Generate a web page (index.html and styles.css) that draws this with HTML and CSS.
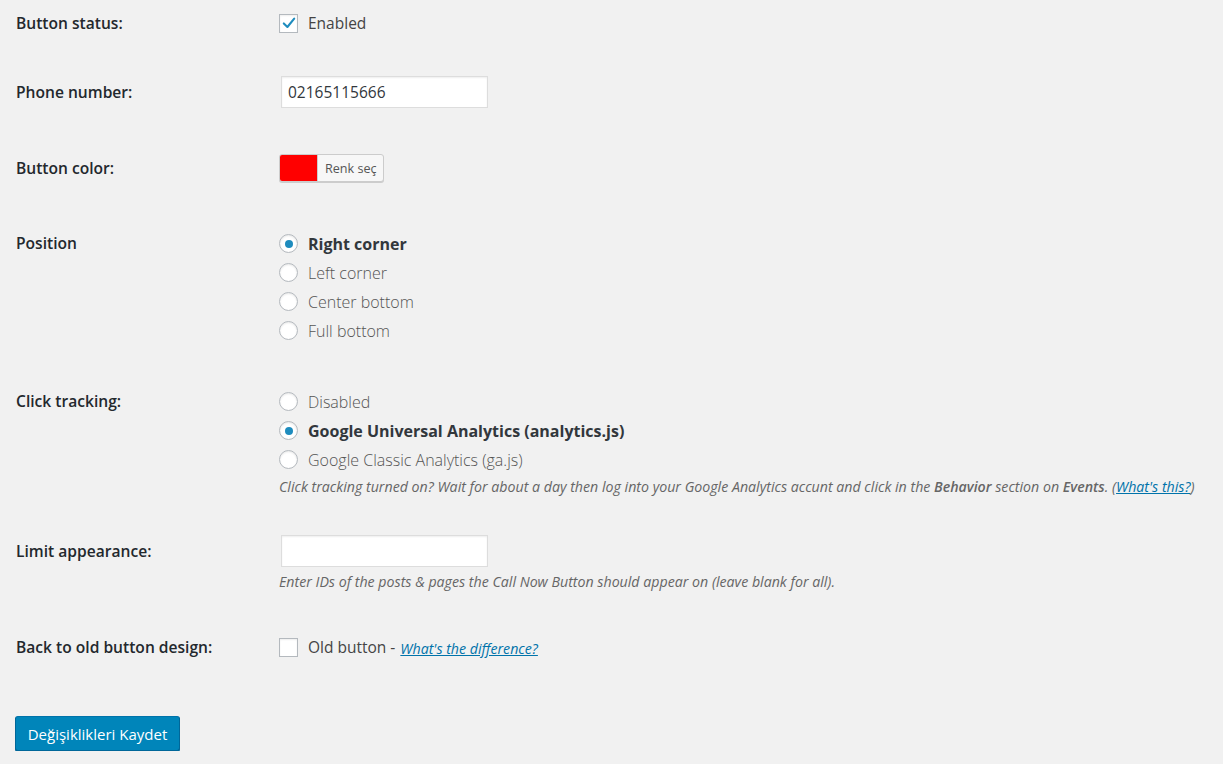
FILE: index.html
```html
<!DOCTYPE html>
<html lang="tr">
<head>
  <meta charset="UTF-8" />
  <title>Call Now Button</title>
  <link rel="stylesheet" href="styles.css">
</head>
<body>
  <form class="settings">

    <div class="row row-center row-status">
      <div class="label">Button status:</div>
      <div class="field">
        <label class="check">
          <span class="box checked">
            <svg viewBox="0 0 20 20" width="16" height="16"><path d="M3.5 10.5 L8 15 L16.5 4.5" fill="none" stroke="#1e8cbe" stroke-width="2.6" stroke-linecap="round" stroke-linejoin="round"/></svg>
          </span>
          <span class="text">Enabled</span>
        </label>
      </div>
    </div>

    <div class="row row-center row-phone">
      <div class="label">Phone number:</div>
      <div class="field">
        <input class="input" type="text" value="02165115666">
      </div>
    </div>

    <div class="row row-center row-color">
      <div class="label">Button color:</div>
      <div class="field">
        <button type="button" class="color-btn">
          <span class="swatch"></span>
          <span class="color-text">Renk seç</span>
        </button>
      </div>
    </div>

    <div class="row row-position">
      <div class="label label-list">Position</div>
      <div class="field">
        <label class="radio"><span class="dot checked"></span><span class="text strong">Right corner</span></label>
        <label class="radio"><span class="dot"></span><span class="text light">Left corner</span></label>
        <label class="radio"><span class="dot"></span><span class="text light">Center bottom</span></label>
        <label class="radio"><span class="dot"></span><span class="text light">Full bottom</span></label>
      </div>
    </div>

    <div class="row row-tracking">
      <div class="label label-list">Click tracking:</div>
      <div class="field">
        <label class="radio"><span class="dot"></span><span class="text light">Disabled</span></label>
        <label class="radio"><span class="dot checked"></span><span class="text strong">Google Universal Analytics (analytics.js)</span></label>
        <label class="radio"><span class="dot"></span><span class="text light">Google Classic Analytics (ga.js)</span></label>
        <p class="description">Click tracking turned on? Wait for about a day then log into your Google Analytics accunt and click in the <strong>Behavior</strong> section on <strong>Events</strong>. (<a href="#">What's this?</a>)</p>
      </div>
    </div>

    <div class="row row-limit">
      <div class="label label-input">Limit appearance:</div>
      <div class="field">
        <input class="input" type="text" value="">
        <p class="description desc-limit">Enter IDs of the posts &amp; pages the Call Now Button should appear on (leave blank for all).</p>
      </div>
    </div>

    <div class="row row-center row-old">
      <div class="label">Back to old button design:</div>
      <div class="field">
        <label class="check">
          <span class="box"></span>
          <span class="text">Old button</span>
        </label>
        <span class="dash">-</span>
        <a class="small-link" href="#">What's the difference?</a>
      </div>
    </div>

    <div class="submit">
      <button type="button" class="button-primary">Değişiklikleri Kaydet</button>
    </div>
  </form>
</body>
</html>
```

FILE: styles.css
```css
body {
  margin: 0;
  background: #f1f1f1;
  color: #444;
  font-family: "Open Sans", "Noto Sans", sans-serif;
  font-size: 13px;
}

.settings {
  padding: 13px 0 0 16px;
  display: flex;
  flex-direction: column;
}

.row {
  display: flex;
  align-items: flex-start;
}

.row-center {
  align-items: center;
}

.label {
  width: 263px;
  flex-shrink: 0;
  font-size: 15.6px;
  font-weight: 600;
  color: #23282d;
  line-height: 20px;
}

.label-list {
  line-height: 28px;
}

.label-input {
  line-height: 32px;
}

.field {
  display: flex;
  flex-direction: column;
  align-items: flex-start;
}

.row-center .field {
  flex-direction: row;
  align-items: center;
}

/* row spacing */
.row-status { height: 20px; }
.row-phone { margin-top: 43px; }
.row-color { margin-top: 46px; }
.row-position { margin-top: 47px; }
.row-tracking { margin-top: 42px; }
.row-limit { margin-top: 38px; }
.row-old { margin-top: 45px; height: 20px; }

/* checkbox */
.check {
  display: flex;
  align-items: center;
}

.box {
  width: 19px;
  height: 19px;
  box-sizing: border-box;
  background: #fff;
  border: 1px solid #b4b9be;
  box-shadow: inset 0 1px 2px rgba(0, 0, 0, 0.07);
  display: flex;
  align-items: center;
  justify-content: center;
}

.check .text {
  margin-left: 10px;
  font-size: 15.5px;
  color: #444;
}

/* text inputs */
.input {
  margin: 0 0 0 2px;
  width: 207px;
  height: 32px;
  box-sizing: border-box;
  border: 1px solid #ddd;
  box-shadow: inset 0 1px 2px rgba(0, 0, 0, 0.07);
  background: #fff;
  color: #32373c;
  font-family: "Open Sans", "Noto Sans", sans-serif;
  font-size: 15.5px;
  padding: 0 6px;
  outline: none;
}

/* color picker */
.color-btn {
  display: flex;
  align-items: stretch;
  height: 28px;
  padding: 0;
  margin: 0;
  border: 1px solid #ccc;
  border-radius: 3px;
  background: #f7f7f7;
  box-shadow: 0 1px 0 #ccc;
  overflow: hidden;
  cursor: pointer;
}

.swatch {
  width: 37px;
  background: #ff0000;
  border-right: 1px solid #ccc;
}

.color-text {
  display: flex;
  align-items: center;
  padding: 0 6px 0 7px;
  font-family: "Open Sans", "Noto Sans", sans-serif;
  font-size: 12.6px;
  color: #555;
}

/* radios */
.radio {
  display: flex;
  align-items: center;
  height: 29px;
}

.dot {
  width: 19px;
  height: 19px;
  box-sizing: border-box;
  border-radius: 50%;
  background: #fff;
  border: 1px solid #b4b9be;
  box-shadow: inset 0 1px 2px rgba(0, 0, 0, 0.1);
  display: flex;
  align-items: center;
  justify-content: center;
}

.dot.checked::before {
  content: '';
  width: 8px;
  height: 8px;
  border-radius: 50%;
  background: #1e8cbe;
}

.radio .text {
  margin-left: 10px;
  font-size: 16px;
}

.text.strong {
  font-weight: 700;
  color: #32373c;
}

.text.light {
  font-weight: 300;
  color: #555;
}

.description {
  margin: 3px 0 0 0;
  font-size: 14.2px;
  font-style: italic;
  color: #666;
  line-height: 20px;
}

.description strong {
  font-weight: 600;
}

.desc-limit {
  margin-top: 5px;
}

a {
  color: #0073aa;
}

.dash {
  margin: 0 5px 0 4px;
  font-size: 15.5px;
  color: #444;
}

.small-link {
  font-size: 14.2px;
  font-style: italic;
  margin-top: 2px;
}

/* submit */
.submit {
  margin-top: 59px;
  margin-left: -1px;
}

.button-primary {
  height: 35px;
  width: 165px;
  padding: 0 10px;
  background: #0085ba;
  border: 1px solid;
  border-color: #0073aa #006799 #006799;
  border-radius: 3px;
  box-shadow: 0 1px 0 #006799;
  color: #fff;
  font-family: "Open Sans", "Noto Sans", sans-serif;
  font-size: 15px;
  cursor: pointer;
}
```
